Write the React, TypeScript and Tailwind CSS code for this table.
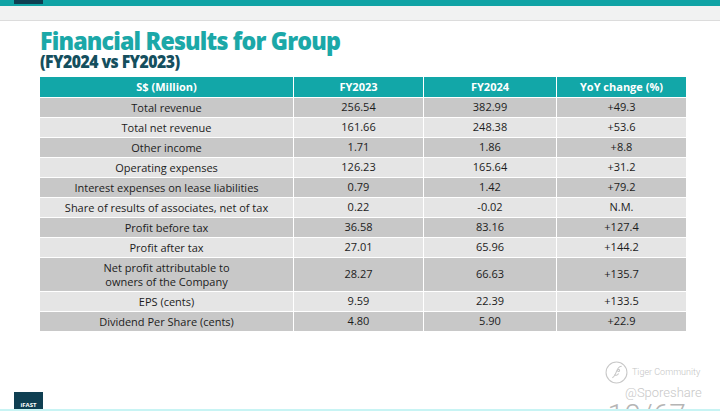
const rows: { label: string[]; a: string; b: string; c: string; tall?: boolean }[] = [
  { label: ['Total revenue'], a: '256.54', b: '382.99', c: '+49.3' },
  { label: ['Total net revenue'], a: '161.66', b: '248.38', c: '+53.6' },
  { label: ['Other income'], a: '1.71', b: '1.86', c: '+8.8' },
  { label: ['Operating expenses'], a: '126.23', b: '165.64', c: '+31.2' },
  { label: ['Interest expenses on lease liabilities'], a: '0.79', b: '1.42', c: '+79.2' },
  { label: ['Share of results of associates, net of tax'], a: '0.22', b: '-0.02', c: 'N.M.' },
  { label: ['Profit before tax'], a: '36.58', b: '83.16', c: '+127.4' },
  { label: ['Profit after tax'], a: '27.01', b: '65.96', c: '+144.2' },
  { label: ['Net profit attributable to', 'owners of the Company'], a: '28.27', b: '66.63', c: '+135.7', tall: true },
  { label: ['EPS (cents)'], a: '9.59', b: '22.39', c: '+133.5' },
  { label: ['Dividend Per Share (cents)'], a: '4.80', b: '5.90', c: '+22.9' },
];

const cols = 'grid grid-cols-[253px_129px_132px_129px] gap-x-px';

export default function App() {
  return (
    <div className="relative w-[720px] h-[411px] overflow-hidden bg-white font-['Open_Sans',sans-serif]">
      {/* top bars */}
      <div className="h-[6px] bg-[#10a3a5] flex items-start px-[14px]">
        <div className="w-[29px] h-[4px] bg-[#0f3f52]" />
      </div>
      <div className="h-[15px] bg-[#f1f2f2] border-b border-[#dcdcdc]" />

      <div className="pl-[40px] pt-[6px]">
        <h1 className="text-[#1ba8a8] text-[25px] leading-[26px] font-extrabold tracking-[-0.9px] scale-x-[0.93] origin-left">
          Financial Results for Group
        </h1>
        <h2 className="text-[#154f5e] text-[17px] leading-[18px] font-extrabold tracking-[-0.6px] scale-x-[0.93] origin-left">
          (FY2024 vs FY2023)
        </h2>

        <div className="mt-[6px] w-[643px] flex flex-col gap-y-px text-[11px] text-[#1c1c1c]">
          <div className={cols}>
            {['S$ (Million)', 'FY2023', 'FY2024', 'YoY change (%)'].map((h) => (
              <div key={h} className="h-[20px] bg-[#12a7a8] text-white font-bold flex items-center justify-center">
                {h}
              </div>
            ))}
          </div>
          {rows.map((r, i) => {
            const bg = i % 2 === 0 ? 'bg-[#c8c8c8]' : 'bg-[#e5e5e5]';
            const h = r.tall ? 'h-[33px]' : 'h-[19px]';
            return (
              <div key={i} className={cols}>
                <div className={`${h} ${bg} flex flex-col items-center justify-center leading-[14px]`}>
                  {r.label.map((l) => (
                    <span key={l}>{l}</span>
                  ))}
                </div>
                {[r.a, r.b, r.c].map((v, j) => (
                  <div key={j} className={`${h} ${bg} flex items-center justify-center`}>
                    {v}
                  </div>
                ))}
              </div>
            );
          })}
        </div>
      </div>

      {/* watermark */}
      <div className="absolute left-[605px] top-[361px] flex items-center gap-[4px] text-[#c4c4c4]">
        <svg width="23" height="23" viewBox="0 0 22 22" fill="none" stroke="#c8c8c8" strokeWidth="1">
          <circle cx="11" cy="11" r="10" />
          <path d="M7 16c2-1 3-3 4-6s3-5 5-5" />
          <path d="M9 13c1 1 3 1 4-1" />
          <circle cx="13" cy="9" r="1" />
        </svg>
        <span className="text-[9px] font-['Roboto',sans-serif] font-light">Tiger Community</span>
      </div>
      <div className="absolute left-[625px] top-[385px] text-[13px] leading-[16px] text-[#c8c8c8] font-['Roboto',sans-serif] font-light">
        @Sporeshare
      </div>

      {/* footer */}
      <div className="absolute left-0 right-0 bottom-0 flex flex-col">
        <div className="flex items-end justify-between px-[14px]">
          <div className="w-[29px] h-[17px] bg-[#0f3f52] flex items-end justify-center text-white text-[6px] font-bold leading-[8px]">
            iFAST
          </div>
          <div className="mr-[20px] h-[9px] overflow-hidden text-[30px] leading-[30px] font-light text-[#b5b5b5] font-['Roboto',sans-serif]">
            10/67
          </div>
        </div>
        <div className="h-[2px] bg-[#c8f4f4]" />
      </div>
    </div>
  );
}
